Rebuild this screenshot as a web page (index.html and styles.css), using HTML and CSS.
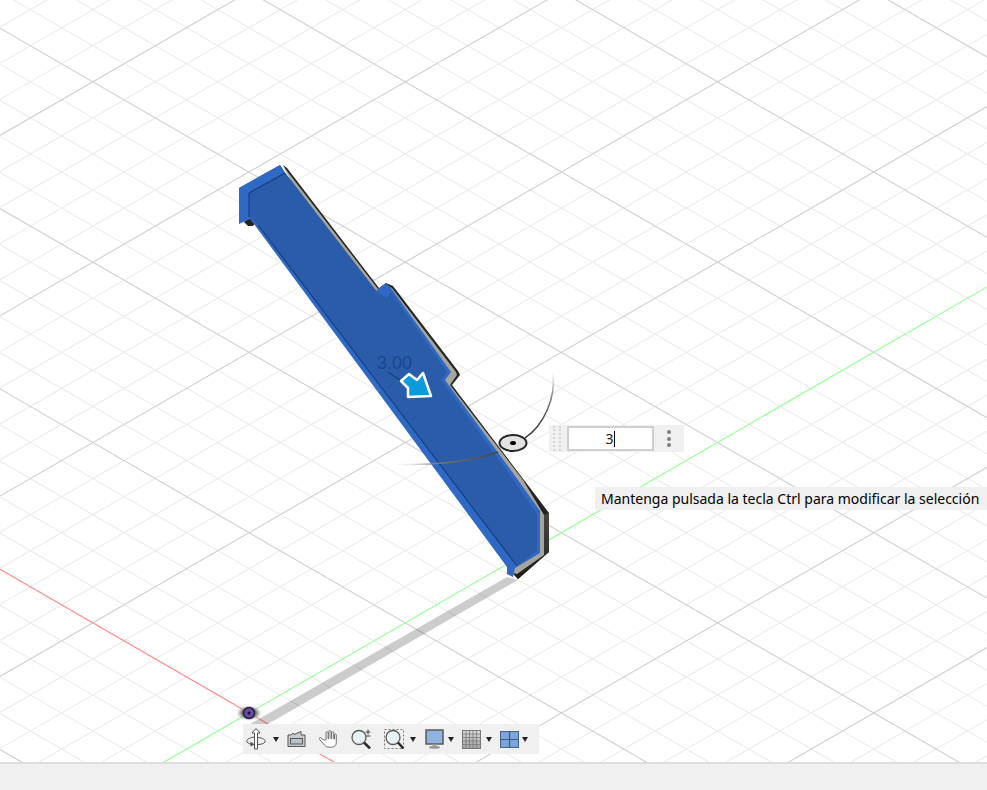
FILE: index.html
```html
<!DOCTYPE html>
<html lang="es">
<head>
<meta charset="utf-8">
<title>Vista 3D</title>
<link rel="stylesheet" href="styles.css">
</head>
<body>
<main class="viewport">
  <svg class="scene" viewBox="0 0 987 790" width="987" height="790" aria-hidden="true">
    <defs>
      <linearGradient id="fadeUp" gradientUnits="userSpaceOnUse" x1="525" y1="438" x2="553" y2="373">
        <stop offset="0" stop-color="#222"/><stop offset="0.65" stop-color="#777"/><stop offset="1" stop-color="#fff"/>
      </linearGradient>
      <linearGradient id="fadeLeft" gradientUnits="userSpaceOnUse" x1="498" y1="452" x2="390" y2="465">
        <stop offset="0" stop-color="#444"/><stop offset="0.55" stop-color="#777"/><stop offset="1" stop-color="#fff" stop-opacity="0"/>
      </linearGradient>
      <radialGradient id="halo">
        <stop offset="0.55" stop-color="#777"/><stop offset="1" stop-color="#ccc" stop-opacity="0"/>
      </radialGradient>
      <linearGradient id="sideShade" gradientUnits="userSpaceOnUse" x1="549" y1="513" x2="518" y2="579">
        <stop offset="0" stop-color="#4a4741"/><stop offset="1" stop-color="#1c1b19"/>
      </linearGradient>
    </defs>
    <path class="grid-minor" d="M0 27.2l987-569.9M0 63.3l987-569.9M0 99.3l987-569.9M0 171.5l987-569.9M0 207.5l987-569.9M0 243.6l987-569.9M0 279.7l987-569.9M0 351.8l987-569.9M0 387.9l987-569.9M0 424l987-569.9M0 460l987-569.9M0 532.2l987-569.9M0 568.2l987-569.9M0 604.3l987-569.9M0 640.4l987-569.9M0 712.5l987-569.9M0 748.6l987-569.9M0 784.7l987-569.9M0 820.7l987-569.9M0 892.9l987-569.9M0 928.9l987-569.9M0 965l987-569.9M0 1001.1l987-569.9M0 1073.2l987-569.9M0 1109.3l987-569.9M0 1145.4l987-569.9M0 1181.4l987-569.9M0 1253.6l987-569.9M0 1289.6l987-569.9M0 1325.7l987-569.9M0 1361.8l987-569.9M0 -549l987 569.9M0 -476.8l987 569.9M0 -440.8l987 569.9M0 -404.7l987 569.9M0 -368.6l987 569.9M0 -296.5l987 569.9M0 -260.4l987 569.9M0 -224.3l987 569.9M0 -188.3l987 569.9M0 -116.1l987 569.9M0 -80.1l987 569.9M0 -44l987 569.9M0 -7.9l987 569.9M0 64.2l987 569.9M0 100.3l987 569.9M0 136.4l987 569.9M0 172.4l987 569.9M0 244.6l987 569.9M0 280.6l987 569.9M0 316.7l987 569.9M0 352.8l987 569.9M0 424.9l987 569.9M0 461l987 569.9M0 497.1l987 569.9M0 533.1l987 569.9M0 605.3l987 569.9M0 641.4l987 569.9M0 677.4l987 569.9M0 713.5l987 569.9M0 785.6l987 569.9"/>
    <path class="grid-major" d="M0 135.4l987-569.9M0 315.8l987-569.9M0 496.1l987-569.9M0 676.5l987-569.9M0 1037.2l987-569.9M0 1217.5l987-569.9M0 -512.9l987 569.9M0 -332.6l987 569.9M0 -152.2l987 569.9M0 28.2l987 569.9M0 208.5l987 569.9M0 388.9l987 569.9M0 749.6l987 569.9"/>
    <path class="axis-red" d="M0 569.2l987 569.9"/>
    <path class="axis-green" d="M0 856.8l987-569.9"/>
    <polygon class="shadow-band" points="507,577 518,580 268,724 250,724"/>

    <polygon class="side-dark" points="244,222 250,217 257,220 253,226 248,226"/>
    <polygon class="side-dark" points="283,165 287,168 379,288 386,283 393,286 458,371 460,375 452,385 524,480 549,513 549,552 518,579 514,575"/>
    <polygon class="side-shade" points="549,513 549,552 518,579 515,575 544,555 544,515"/>
    <polygon class="side-grey" points="283,166 285.5,169 378,289 386,285 392,288 456,372 457,375 450,385 523,480 544,515 544,555 517,574 510,572"/>
    <polygon class="rim" points="239,188 280,165 284,171 376,291 386,283 391,288 451,372 445,380 518,480 540,511 540,553 515,568 513,577 507,574 507,567 254,224 250,219 239,224"/>
    <polygon class="face" points="249,193 285,173 378,293 387,298 391,292 447,372 441,380 515,482 537,514 537,551 517,566 258,225 249,216"/>
    <polygon class="cap" points="239,188 280,165 285,173 249,193"/>
    <polygon class="cap" points="382,288 386,283 391,289 386,298"/>
    <path class="edge" d="M249 193L285 173M249 193V217M258 225L517 566"/>
    <path class="leader" d="M388 372L403 382"/>
    <path class="arc-up" d="M525 438C544 425 556 398 553 373"/>
    <path class="arc-left" d="M498 452C470 462 430 466 390 464"/>
    <polygon class="arrow" points="431,396 423,373 417,380 409,374 401,381 408,388 408,397"/>
    <ellipse class="pivot" cx="513" cy="443" rx="13.5" ry="8"/>
    <ellipse class="pivot-dot" cx="513" cy="443" rx="3" ry="2"/>

    <ellipse class="origin-halo" cx="249" cy="713" rx="13" ry="8"/>
    <circle class="origin-ring" cx="249" cy="713" r="5.5"/>
    <circle class="origin-dot" cx="249" cy="713" r="1.500"/>
  </svg>

  <span class="dimension">3.00</span>

  <div class="value-box">
    <span class="grip"></span>
    <span class="value-input"><span class="value-text">3</span><span class="caret"></span></span>
    <span class="kebab"><i></i><i></i><i></i></span>
  </div>

  <div class="tooltip">Mantenga pulsada la tecla Ctrl para modificar la selección</div>

  <nav class="toolbar" aria-label="Navegación">
    <svg class="tool t-orbit" viewBox="0 0 20 22"><path class="ic-line" d="M10 .5L6 5h2.500v16h3V5H14z"/><path class="ic-stroke" d="M8 9C2.500 10 0 12 1 14c1 1.700 4 2.500 7 2.500M12 9.500c5 .5 8 2.500 7 4.500-1 1.500-4 2.500-7 2.500"/><path class="ic-fill" d="M4.500 13.500l4 3-4 2z"/></svg>
    <span class="caret-down c-orbit"></span>
    <svg class="tool t-folder" viewBox="0 0 19 16"><path class="ic-folder" d="M1 15.500V4h3l2-2 1 1.500L14 .5V4h4v11.500z"/><rect class="ic-slot" x="3.500" y="7.500" width="12" height="5.500"/></svg>
    <svg class="tool t-hand" viewBox="0 0 22 24" preserveAspectRatio="none"><path class="ic-hand" d="M5.500 13.500L2 10.500c-1-1-2.500.5-1.500 1.800L6 20c1.500 2 3 3 6 3 5 0 7-2 7-6V6.500c0-1.600-2-1.600-2 0V12l-.8-.2V3.500c0-1.600-2.200-1.600-2.200 0V11.500h-.8V2c0-1.700-2.300-1.700-2.300 0v9.500H10V3.500c0-1.600-2.200-1.600-2.200 0V13l-2.300.5z"/></svg>
    <svg class="tool t-zoom" viewBox="0 0 20 20"><circle class="ic-lens" cx="8" cy="8.500" r="7"/><path class="ic-handle" d="M13 13.500l6 6"/><path class="ic-plus" d="M14.500 3h5M17 .5v5M14.500 7h5"/></svg>
    <svg class="tool t-window" viewBox="0 0 20 20"><rect class="ic-dash" x=".5" y=".5" width="19" height="19"/><circle class="ic-lens" cx="9" cy="8.500" r="7"/><path class="ic-handle" d="M14 13.500l5.500 6"/></svg>
    <span class="caret-down c-window"></span>
    <svg class="tool t-monitor" viewBox="0 0 19 20"><rect class="ic-screen" x="1" y="1" width="17" height="14"/><path class="ic-stand" d="M7.500 15.500h4V18h-4z"/><ellipse class="ic-base" cx="9.500" cy="18.300" rx="5.500" ry="1.500"/></svg>
    <span class="caret-down c-monitor"></span>
    <svg class="tool t-grid" viewBox="0 0 19 19"><defs><linearGradient id="gridFade" x1="0" y1="0" x2="0" y2="1"><stop offset="0" stop-color="#dcdcdc"/><stop offset="1" stop-color="#a2a2a2"/></linearGradient></defs><rect class="ic-gridbox" x=".5" y=".5" width="18" height="18"/><path class="ic-gridlines" d="M4 .5v18M7.500 .5v18M11 .5v18M14.500 .5v18M.5 4h18M.5 7.500h18M.5 11h18M.5 14.500h18"/></svg>
    <span class="caret-down c-grid"></span>
    <svg class="tool t-pane" viewBox="0 0 19 17"><rect class="ic-pane" x=".5" y=".5" width="18" height="16"/><path class="ic-panelines" d="M9.500 .5v16M.5 8.500h18"/></svg>
    <span class="caret-down c-pane"></span>
  </nav>

  <footer class="statusbar"></footer>
</main>
</body>
</html>
```
FILE: styles.css
```css
* { box-sizing: border-box; }
html, body { margin: 0; padding: 0; }
body { width: 987px; height: 790px; overflow: hidden; background: #fff; }

.viewport { position: relative; width: 987px; height: 790px; overflow: hidden; background: #fff; font-family: "Liberation Sans", Arial, sans-serif; }
.scene { position: absolute; left: 0; top: 0; display: block; }

.grid-minor { fill: none; stroke: #ececec; stroke-width: 1.100; }
.grid-major { fill: none; stroke: #cfcfcf; stroke-width: 1.100; }
.axis-red { fill: none; stroke: #ff8f8f; stroke-width: 1.200; }
.axis-green { fill: none; stroke: #96ff96; stroke-width: 1.200; }
.shadow-band { fill: rgba(0, 0, 0, .2); }
.side-dark { fill: #262420; }
.side-shade { fill: url(#sideShade); }
.side-grey { fill: #a5a49d; }
.rim { fill: #2f69c4; }
.face { fill: #2a5ca9; }
.cap { fill: #2f69c4; }
.edge { fill: none; stroke: #123f80; stroke-width: 1.100; }
.leader { fill: none; stroke: #173f7e; stroke-width: 1.500; }
.arc-up { fill: none; stroke: url(#fadeUp); stroke-width: 1.500; }
.arc-left { fill: none; stroke: url(#fadeLeft); stroke-width: 1.500; }
.arrow { fill: #0a9bdc; stroke: #fff; stroke-width: 2.500; stroke-linejoin: round; }
.pivot { fill: #e2e2e2; stroke: #262626; stroke-width: 2; }
.pivot-dot { fill: #000; }
.origin-halo { fill: url(#halo); }
.origin-ring { fill: #6a4aa8; stroke: #26203a; stroke-width: 1.500; }
.origin-dot { fill: #111; }

.dimension { position: absolute; left: 377px; top: 353px; font-size: 18px; line-height: 20px; color: #1b478d; }

.value-box { position: absolute; left: 549px; top: 425px; width: 135px; height: 27px; display: flex; align-items: center; background: #f0f0f0; }
.grip { flex: none; width: 8px; height: 25px; margin: 0 6px 0 4px; border-left: 2px dotted #d5d5d5; border-right: 2px dotted #d5d5d5; }
.value-input { flex: none; width: 87px; height: 25px; display: flex; align-items: center; justify-content: center; background: #fff; border: 2px solid #cfcfcf; font-family: "Noto Sans", sans-serif; font-size: 14px; color: #222; }
.value-text { margin-left: -1px; }
.caret { width: 1px; height: 16px; background: #000; }
.kebab { flex: 1; display: flex; flex-direction: column; align-items: center; gap: 2.500px; }
.kebab i { width: 4px; height: 4px; border-radius: 50%; background: #7f7f7f; display: block; }

.tooltip { position: absolute; left: 595px; top: 487px; width: 392px; height: 23px; padding-left: 6px; background: #f0f0f0; color: #000; font-family: "Noto Sans", sans-serif; font-size: 14px; line-height: 23px; white-space: nowrap; }

.toolbar { position: absolute; left: 243px; top: 724px; width: 296px; height: 30px; display: flex; align-items: center; background: #f0f0f0; }
.tool { display: block; flex: none; }
.t-orbit { width: 20px; height: 22px; margin-left: 3px; }
.t-folder { width: 19px; height: 16px; margin-left: 8.500px; }
.t-hand { width: 20px; height: 18px; margin-left: 13px; }
.t-zoom { width: 20px; height: 20px; margin-left: 12px; }
.t-window { width: 20px; height: 20px; margin-left: 13px; }
.t-monitor { width: 19px; height: 20px; margin-left: 9.500px; }
.t-grid { width: 19px; height: 19px; margin-left: 8.500px; }
.t-pane { width: 19px; height: 17px; margin-left: 8.500px; }
.caret-down { flex: none; width: 0; height: 0; border-left: 3.500px solid transparent; border-right: 3.500px solid transparent; border-top: 5px solid #222; }
.c-orbit { margin-left: 6.500px; }
.c-window { margin-left: 5.500px; }
.c-monitor { margin-left: 3.500px; }
.c-grid { margin-left: 4.500px; }
.c-pane { margin-left: 2.500px; }

.ic-line { fill: #fff; stroke: #555; stroke-width: 1; }
.ic-stroke { fill: none; stroke: #555; stroke-width: 1; }
.ic-fill { fill: #555; }
.ic-folder { fill: #c9cccc; stroke: #555; stroke-width: 1; }
.ic-slot { fill: #b7c2cd; stroke: #555; stroke-width: 1; }
.ic-hand { fill: #fff; stroke: #555; stroke-width: 1; }
.ic-lens { fill: #e6f2f5; stroke: #5a5a5a; stroke-width: 1.300; }
.ic-handle { fill: none; stroke: #2b2b2b; stroke-width: 2.500; }
.ic-plus { fill: none; stroke: #444; stroke-width: 1; }
.ic-dash { fill: none; stroke: #777; stroke-width: 1; stroke-dasharray: 2 2; }
.ic-screen { fill: #8fb3e3; stroke: #5a5a5a; stroke-width: 1.500; }
.ic-stand { fill: #aaa; }
.ic-base { fill: #9a9a9a; }
.ic-gridbox { fill: url(#gridFade); stroke: #777; stroke-width: 1; }
.ic-gridlines { fill: none; stroke: #777; stroke-width: .8; }
.ic-pane { fill: #7ea6dc; stroke: #47678f; stroke-width: 1.200; }
.ic-panelines { fill: none; stroke: #3a5a88; stroke-width: 1.200; }

.statusbar { position: absolute; left: 0; right: 0; top: 762px; bottom: 0; background: #f0f0f0; border-top: 2px solid #dedede; }
```
